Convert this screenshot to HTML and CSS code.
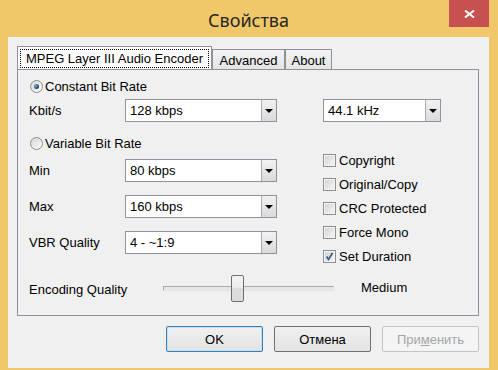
FILE: index.html
```html
<!DOCTYPE html>
<html lang="ru">
<head>
  <meta charset="UTF-8" />
  <title>Свойства</title>
  <link rel="stylesheet" href="styles.css">
</head>
<body>
  <div class="window">
    <div class="titlebar">
      <span class="title">Свойства</span>
      <button class="close" aria-label="Close">
        <svg width="11" height="8" viewBox="0 0 11 8"><path d="M1 0.5 L10 7.5 M10 0.5 L1 7.5" stroke="#fff" stroke-width="2"/></svg>
      </button>
    </div>

    <div class="client">
      <div class="tabs">
        <div class="tab tab-main active"><span class="focus">MPEG Layer III Audio Encoder</span></div>
        <div class="tab tab-adv">Advanced</div>
        <div class="tab tab-about">About</div>
      </div>

      <div class="panel">
        <div class="cols">
          <div class="col-left">
            <div class="radio-row">
              <span class="radio checked"></span>
              <span>Constant Bit Rate</span>
            </div>
            <div class="field first">
              <span class="field-label">Kbit/s</span>
              <div class="combo"><span class="value">128 kbps</span><span class="drop"></span></div>
            </div>
            <div class="radio-row second">
              <span class="radio"></span>
              <span>Variable Bit Rate</span>
            </div>
            <div class="field min">
              <span class="field-label">Min</span>
              <div class="combo"><span class="value">80 kbps</span><span class="drop"></span></div>
            </div>
            <div class="field">
              <span class="field-label">Max</span>
              <div class="combo"><span class="value">160 kbps</span><span class="drop"></span></div>
            </div>
            <div class="field">
              <span class="field-label">VBR Quality</span>
              <div class="combo"><span class="value">4 - ~1:9</span><span class="drop"></span></div>
            </div>
          </div>

          <div class="col-right">
            <div class="combo combo-small"><span class="value">44.1 kHz</span><span class="drop"></span></div>
            <div class="checks">
              <div class="check"><span class="box"></span>Copyright</div>
              <div class="check"><span class="box"></span>Original/Copy</div>
              <div class="check"><span class="box"></span>CRC Protected</div>
              <div class="check"><span class="box"></span>Force Mono</div>
              <div class="check">
                <span class="box">
                  <svg width="11" height="11" viewBox="0 0 11 11"><path d="M2.5 5.5 L4.5 8.5 L8.5 2" fill="none" stroke="#3b5a8c" stroke-width="1.7"/></svg>
                </span>Set Duration
              </div>
            </div>
          </div>
        </div>

        <div class="slider-row">
          <span class="slider-label">Encoding Quality</span>
          <div class="slider">
            <div class="track"></div>
            <div class="thumb"></div>
          </div>
          <span class="slider-value">Medium</span>
        </div>
      </div>

      <div class="buttons">
        <button class="btn default">OK</button>
        <button class="btn">Отмена</button>
        <button class="btn disabled">При<u>м</u>енить</button>
      </div>
    </div>
  </div>
</body>
</html>
```

FILE: styles.css
```css
* {
  box-sizing: border-box;
}
body {
  margin: 0;
  width: 498px;
  height: 370px;
  overflow: hidden;
  background: #f0c86a;
  font-family: "Liberation Sans", Arial, sans-serif;
  font-size: 13px;
  color: #000;
}
.window {
  display: flex;
  flex-direction: column;
  height: 370px;
}
.titlebar {
  height: 37px;
  display: grid;
  grid-template-columns: 1fr auto 1fr;
  padding: 0 9px 0 8px;
}
.title {
  grid-column: 2;
  font-family: "Noto Sans", "Open Sans", sans-serif;
  font-size: 18px;
  line-height: 18px;
  margin-top: 11px;
  color: #262626;
}
.close {
  grid-column: 3;
  justify-self: end;
  align-self: start;
  width: 40px;
  height: 27px;
  border: none;
  padding: 0;
  background: #c75050;
  display: flex;
  align-items: center;
  justify-content: center;
}

/* client area */
.client {
  flex: 1;
  margin: 0 9px 2px 8px;
  background: #f0f0f0;
  padding: 9px 10px 0 9px;
}
.tabs {
  display: flex;
  align-items: flex-end;
  height: 23px;
}
.tab {
  height: 20px;
  border: 1px solid #8e9199;
  border-bottom: none;
  background: linear-gradient(#f3f3f3, #e4e4e4);
  display: flex;
  align-items: center;
  justify-content: center;
  padding-top: 1px;
}
.tab-main {
  width: 195px;
}
.tab-adv {
  width: 73px;
}
.tab-about {
  width: 47px;
}
.tab.active {
  height: 23px;
  background: #fff;
  padding: 2px 2px 1px 2px;
}
.focus {
  flex: 1;
  align-self: stretch;
  border: 1px dotted #000;
  display: flex;
  align-items: center;
  justify-content: center;
}

.panel {
  height: 247px;
  border: 1px solid #8e9199;
  background: #f0f0f0;
  padding: 8px 0 0 11px;
}
.cols {
  display: flex;
  align-items: flex-start;
  gap: 46px;
}
.col-left {
  width: 248px;
  display: flex;
  flex-direction: column;
}
.radio-row {
  height: 16px;
  display: flex;
  align-items: center;
  gap: 2px;
}
.radio-row.second {
  margin-top: 13px;
}
.radio {
  width: 13px;
  height: 13px;
  margin-left: 1px;
  border: 1px solid #8e8f8f;
  border-radius: 50%;
  background: linear-gradient(135deg, #d6d6d6, #fbfbfb);
  display: flex;
  align-items: center;
  justify-content: center;
}
.radio.checked::after {
  content: "";
  width: 5px;
  height: 5px;
  border-radius: 50%;
  background: radial-gradient(circle at 35% 35%, #7aa8d6, #1e3f6f 70%);
}
.field {
  height: 23px;
  display: flex;
  align-items: center;
  margin-top: 13px;
}
.field.first {
  margin-top: 5px;
}
.field.min {
  margin-top: 8px;
}
.field-label {
  width: 96px;
}
.combo {
  width: 152px;
  height: 23px;
  border: 1px solid #8f939b;
  background: #fff;
  display: flex;
}
.combo .value {
  flex: 1;
  padding-left: 4px;
  display: flex;
  align-items: center;
}
.combo .drop {
  width: 15px;
  border-left: 1px solid #acacac;
  background: linear-gradient(#f2f2f2, #dadada);
  display: flex;
  align-items: center;
  justify-content: center;
}
.combo .drop::after {
  content: "";
  border-left: 4px solid transparent;
  border-right: 4px solid transparent;
  border-top: 4px solid #000;
  margin-top: 1px;
}
.combo-small {
  width: 118px;
  margin-top: 21px;
}
.checks {
  margin-top: 26px;
  display: flex;
  flex-direction: column;
}
.check {
  height: 24px;
  display: flex;
  align-items: center;
  gap: 3px;
}
.box {
  width: 13px;
  height: 13px;
  border: 1px solid #8e8f8f;
  background: linear-gradient(135deg, #d2d2d2, #f6f6f6);
  box-shadow: inset 0 0 0 1px #f4f4f4;
  display: flex;
  align-items: center;
  justify-content: center;
}

/* slider */
.slider-row {
  margin-top: 7px;
  height: 27px;
  display: flex;
  align-items: center;
}
.slider-label {
  width: 134px;
  margin-top: 2px;
}
.slider {
  position: relative;
  width: 171px;
  height: 27px;
  display: flex;
  align-items: center;
}
.track {
  width: 100%;
  height: 5px;
  border: 1px solid;
  border-color: #a9a9a9 #e3e3e3 #e3e3e3 #a9a9a9;
  background: #e6e6e6;
}
.thumb {
  position: absolute;
  left: 68px;
  top: 0;
  width: 13px;
  height: 27px;
  border: 1px solid #6f6f6f;
  border-radius: 2px;
  background: linear-gradient(#f2f2f2 0%, #ececec 45%, #dcdcdc 50%, #dcdcdc 100%);
}
.slider-value {
  margin-left: 27px;
  margin-top: -2px;
}

/* bottom buttons */
.buttons {
  margin-top: 10px;
  display: flex;
  justify-content: flex-end;
  gap: 11px;
}
.btn {
  width: 97px;
  height: 26px;
  border: 1px solid #707070;
  border-radius: 2px;
  background: linear-gradient(#f0f0f0, #e3e3e3);
  font-family: "Liberation Sans", Arial, sans-serif;
  font-size: 13px;
  color: #000;
  padding: 0;
}
.btn.default {
  border-color: #3c7fb1;
  box-shadow: inset 0 0 0 1px #bfe0f7;
}
.btn.disabled {
  border-color: #c4c4c4;
  background: #f4f4f4;
  color: #a3a7aa;
}
```
